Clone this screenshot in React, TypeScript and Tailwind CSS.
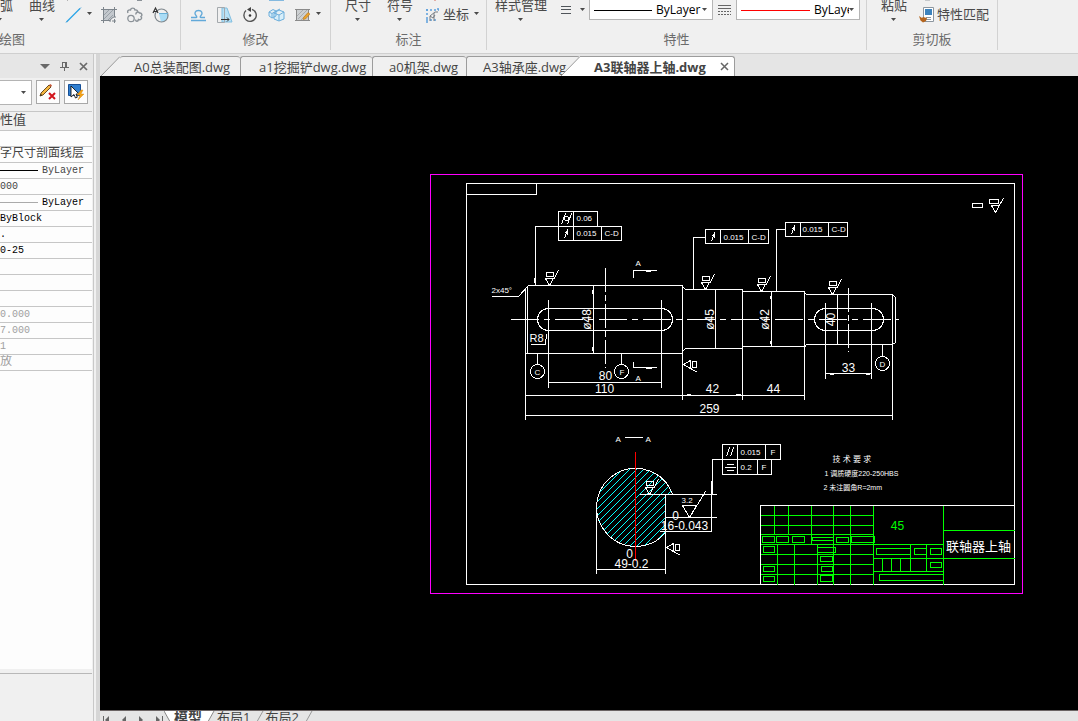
import React from "react";

const ui = "font-['Open_Sans','Noto_Sans_CJK_SC',sans-serif]";

function Caret({ className = "" }: { className?: string }) {
  return (
    <svg className={`shrink-0 ${className}`} width="6" height="4" viewBox="0 0 6 4">
      <path d="M0 0h5L2.5 3z" fill="#4a4a4a" />
    </svg>
  );
}

function Group({ label, className, inset = "", children }: { label: string; className: string; inset?: string; children: React.ReactNode }) {
  return (
    <section className={`flex h-[50px] shrink-0 flex-col border-r border-[#d2d2d2] ${className}`}>
      <div className={`flex h-[29px] shrink-0 items-start ${inset}`}>{children}</div>
      <h2 className="text-center text-[13px] leading-5 text-[#6b6b6b]">{label}</h2>
    </section>
  );
}

function BigButton({ label, className = "" }: { label: string; className?: string }) {
  return (
    <button className={`-mt-1 flex shrink-0 flex-col items-center text-[13px] leading-[18px] whitespace-nowrap ${className}`}>
      {label}
      <Caret className="mt-1" />
    </button>
  );
}

function ToolButton({ label, className = "", caret, text, children }: { label: string; className?: string; caret?: boolean; text?: string; children: React.ReactNode }) {
  return (
    <button aria-label={label} className={`flex h-7 shrink-0 items-center text-[13px] leading-7 whitespace-nowrap ${className}`}>
      <svg width="17" height="28" viewBox="0 0 17 28" fill="none" className="shrink-0">
        {children}
      </svg>
      {text && <span className="ml-px">{text}</span>}
      {caret && <Caret className="ml-[5px]" />}
    </button>
  );
}

function LineCombo({ label, stroke, line }: { label: string; stroke: string; line: string }) {
  return (
    <label className="flex h-5 w-[124px] shrink-0 items-center overflow-hidden border border-t-0 border-[#b5b5b5] bg-white">
      <svg height="2" className={`mr-1 ml-1 shrink-0 ${line}`}>
        <path d="M0 1h80" stroke={stroke} strokeWidth="1" shapeRendering="crispEdges" />
      </svg>
      <select aria-label={label} className="h-5 min-w-0 flex-1 appearance-none overflow-hidden bg-transparent p-0 text-[12px] leading-5 text-black">
        <option>ByLayer</option>
      </select>
      <Caret className="mr-1" />
    </label>
  );
}

function Ribbon() {
  return (
    <header className="flex h-[54px] shrink-0 overflow-hidden border-b border-[#cfcfcf] bg-[#f0f0f0] text-[#4a4a4a]">
      <Group label="绘图" className="-ml-[156px] w-[337px]">
        <div className="flex w-full justify-end pr-[1px]">
          <BigButton label="圆弧" className="mr-4" />
          <BigButton label="曲线" className="mr-[10px]" />
          <ToolButton label="构造线" caret className="w-[35px]">
            <path d="M1.500 22L15 8.500" stroke="#2aa4e8" strokeWidth="1.300" />
            <path d="M1 22.500l2-2M14 9.500l2-2" stroke="#4aa3d8" />
            <path d="M2 0h1" stroke="#777" />
          </ToolButton>
          <ToolButton label="图案填充" className="w-[26px]">
            <path d="M3 10h11v7l-4 4H3z" fill="#c3c8cd" />
            <path d="M3.500 7v16M14.500 7v10M1 9.500h16M1 20.500h9" stroke="#7d858c" />
            <path d="M4 15l5-5M4 19l9-9M8 20l5-5" stroke="#9aa1a8" />
            <path d="M10 22c0-3 2-5 6-5M12 21h4M14.500 19v4" stroke="#7d858c" />
          </ToolButton>
          <ToolButton label="修订云线" className="w-[26px]">
            <circle cx="5" cy="18.500" r="3.200" stroke="#8b9298" strokeWidth="1.300" />
            <path d="M2 13c-1-2 .5-3.500 2.500-3 .5-2.500 4-2.500 4.500 0 2-.5 3 1 2.500 2.500M10 14.500c-.5-2 2-3.500 3.500-1.500 2.500-.5 3 2.500 1.500 3.500 1.500 2-.5 4-2.500 3-.5 2.500-3 2-3 0" stroke="#8b9298" strokeWidth="1.400" />
            <path d="M11 0h5" stroke="#8b9298" strokeWidth="2" />
          </ToolButton>
          <ToolButton label="面域" className="w-[27px]">
            <path d="M7 14h9c0 5-2.500 8-7 8z" fill="#a9dcf6" />
            <circle cx="9.500" cy="15.500" r="6.500" stroke="#7f878d" strokeWidth="1.200" />
            <path d="M1 13L3.500 8 6 13M2 11.500h3" stroke="#333" strokeWidth="1.200" />
            <path d="M7 13.500h9" stroke="#6ab1d8" />
          </ToolButton>
        </div>
      </Group>
      <Group label="修改" className="w-[150px]" inset="pl-[9px]">
        <ToolButton label="偏移" className="w-[26px]">
          <path d="M1 20.500h15M1 17.500h5c1 0 1-1 0-2-2-2-1-5 2.500-5s4.500 3 2.500 5c-1 1-1 2 0 2h4" stroke="#62a9d9" strokeWidth="1.400" />
        </ToolButton>
        <ToolButton label="拉伸" className="w-[26px]">
          <path d="M6 8h5l5 14H6z" fill="#b8e2f7" stroke="#83bfe0" />
          <path d="M1.500 7.500h7v15h-7z" stroke="#a4a9ad" />
          <path d="M5 19.500h8M11 17.500l2 2-2 2" stroke="#333" />
        </ToolButton>
        <ToolButton label="旋转" className="w-[26px]">
          <path d="M4 10.500a6.200 6.200 0 1 0 6-1.200" stroke="#555" strokeWidth="1.400" />
          <path d="M9 7v5L5 9.500z" fill="#444" />
          <circle cx="8" cy="15.500" r="1.300" fill="#333" />
        </ToolButton>
        <ToolButton label="阵列" className="w-[26px]">
          <path d="M1 0h15" stroke="#84b9df" strokeWidth="2" />
          <path d="M1 12l4-2.500 3 1.500v5l-4 2-3-2zM1 12l3 1.500 4-2.500M4 13.500V18M6 13l5-3 5 2v7l-5 2-5-2zM6 13l5 2 5-3M11 15v6M8 11l4-2" fill="#d8effa" stroke="#6caedb" />
        </ToolButton>
        <ToolButton label="编辑图案" caret className="w-[28px]">
          <path d="M2.500 9.500h12v11h-12z" fill="#cdd0d2" stroke="#8a8a8a" />
          <path d="M4 19l9-9M3 16l6-6M7 20l7-7" stroke="#a8abad" />
          <path d="M1 9.500h15M1 20.500h15" stroke="#8a8a8a" />
          <path d="M9.500 17.500l4.500-5 2 1.500-4.500 5-2.500.5z" fill="#e8a22d" stroke="#b46f16" strokeWidth=".5" />
        </ToolButton>
      </Group>
      <Group label="标注" className="w-[156px]" inset="pl-[14px]">
        <BigButton label="尺寸" className="mr-4" />
        <BigButton label="符号" className="mr-[12px]" />
        <ToolButton label="坐标" text="坐标" caret>
          <path d="M1 10h13M1 20h10M2 9v14M13 8v4" stroke="#5b9fdb" strokeWidth="1.500" strokeDasharray="2 2" />
          <path d="M5 21v-5l5-4h3M5 16l3 2 2-3M9 13v8" stroke="#747b82" />
          <path d="M9 0h2" stroke="#d36b5a" />
        </ToolButton>
      </Group>
      <Group label="特性" className="w-[380px]" inset="pl-2">
        <BigButton label="样式管理" className="mr-[13px]" />
        <button aria-label="线宽" className="mt-1 flex h-[11px] shrink-0 items-center">
          <svg width="12" height="11" shapeRendering="crispEdges">
            <path d="M1 2.500h10M1 5.500h10M1 9.500h10" stroke="#50555a" />
          </svg>
          <Caret className="ml-2" />
        </button>
        <span className="w-[3px]" />
        <LineCombo label="线型" stroke="#000" line="w-[58px]" />
        <svg width="13" height="11" className="mx-[5px] mt-1 shrink-0" shapeRendering="crispEdges">
          <path d="M0 1.500h13M0 4.500h13" stroke="#666" />
          <path d="M0 7.500h13M0 10.500h13" stroke="#666" strokeDasharray="2 1" />
        </svg>
        <LineCombo label="颜色" stroke="#f00" line="w-[69px]" />
      </Group>
      <Group label="剪切板" className="w-[131px]" inset="pl-[14px]">
        <BigButton label="粘贴" className="mr-[12px]" />
        <ToolButton label="特性匹配" text="特性匹配">
          <path d="M6 0h5" stroke="#9aa0a6" />
          <path d="M4.500 7.500h10v14h-10z" fill="#fff" stroke="#8c969f" />
          <path d="M6 9h7v6H6z" fill="#3d83bd" />
          <path d="M7 17.500h5M7 19.500h5" stroke="#8c969f" />
          <path d="M0 16l3 2 1-1 4 1-1 3-3 1.500-2.500-2z" fill="#b5651d" />
        </ToolButton>
      </Group>
    </header>
  );
}

const rows: { value: string; tone: string; line?: string }[] = [
  { value: "", tone: "" },
  { value: "字尺寸剖面线层", tone: "text-[12px] text-[#444]" },
  { value: "ByLayer", tone: "text-[10px] text-[#444]", line: "#000" },
  { value: "000", tone: "text-[10px] text-[#444]" },
  { value: "ByLayer", tone: "text-[10px] text-black", line: "#aaa" },
  { value: "ByBlock", tone: "text-[10px] text-black" },
  { value: ".", tone: "text-[10px] text-black" },
  { value: "0-25", tone: "text-[10px] text-black" },
  { value: "", tone: "" },
  { value: "", tone: "" },
  { value: "", tone: "" },
  { value: "0.000", tone: "text-[10px] text-[#a0a0a0]" },
  { value: "7.000", tone: "text-[10px] text-[#a0a0a0]" },
  { value: "1", tone: "text-[10px] text-[#a0a0a0]" },
  { value: "放", tone: "text-[12px] text-[#a0a0a0]" },
];

function PropertyPanel() {
  return (
    <aside className="flex w-[100px] shrink-0 border-r-4 border-[#d6d6d6] bg-[#f0f0f0]">
      <div className="flex w-[94px] shrink-0 flex-col border-r border-[#c8c8c8]">
        <div className="flex h-6 shrink-0 items-center justify-end gap-[10px] bg-[#e6e6e6] pr-[5px]">
          <button aria-label="菜单">
            <svg width="10" height="6" className="block"><path d="M0 1h10L5 6z" fill="#696969" /></svg>
          </button>
          <button aria-label="固定">
            <svg width="9" height="10" className="block"><path d="M2.500 6V1.500h4V6M5.500 2v4M0 6.500h9M4.500 7v3" fill="none" stroke="#696969" shapeRendering="crispEdges" /></svg>
          </button>
          <button aria-label="关闭">
            <svg width="9" height="9" className="block"><path d="M1 1l7 7M8 1L1 8" stroke="#696969" strokeWidth="1.700" /></svg>
          </button>
        </div>
        <div className="flex h-[33px] shrink-0 items-start justify-end gap-1 pt-[2px] pr-[5px]">
          <label className="flex h-[25px] flex-1 items-center border border-l-0 border-[#b4b4b4] bg-white">
            <select aria-label="对象" className="min-w-0 flex-1 appearance-none bg-transparent"><option></option></select>
            <Caret className="mr-1" />
          </label>
          <button aria-label="清除选择" className="h-6 w-6 border border-[#a8a8a8] bg-[#fdfdfd]">
            <svg width="22" height="22" viewBox="0 0 22 22">
              <path d="M3 15l1-3 8-8 2 2-8 8z" fill="#f4b63f" stroke="#5a3c12" strokeWidth=".9" />
              <path d="M12 4l1.500-1 1.500 1.500L14 6z" fill="#c85a3c" />
              <path d="M3 15l1-2 1 1z" fill="#222" />
              <path d="M12 12l6 6M18 12l-6 6" stroke="#d2141c" strokeWidth="2" />
            </svg>
          </button>
          <button aria-label="快速选择" className="h-6 w-6 border border-[#a8a8a8] bg-[#fdfdfd]">
            <svg width="22" height="22" viewBox="0 0 22 22">
              <path d="M3.500 3.500h12v11h-12z" fill="#2f7fd0" stroke="#164f96" />
              <path d="M6 5v11l3-2.500 1.500 3.500 1.800-.8L11 13h3z" fill="#fff" stroke="#111" strokeWidth=".9" />
              <path d="M16 9l-4 5h3l-2 5 6-6h-3l2-4z" fill="#f6a316" stroke="#d07f08" strokeWidth=".4" />
            </svg>
          </button>
        </div>
        <div className="min-h-0 w-[92px] flex-1 overflow-hidden bg-[#fdfdfd] font-['Liberation_Mono','Noto_Sans_CJK_SC',monospace]">
          <table className="w-full table-fixed border-collapse">
            <thead>
              <tr className="border-y border-[#c6c6c6] bg-[#f0f0f0]">
                <th className="p-0 text-left text-[13px] leading-[18px] font-normal text-[#444]">
                  <div className="-ml-[13px] h-[18px] whitespace-nowrap">特性值</div>
                </th>
              </tr>
            </thead>
            <tbody>
              {rows.map((r, i) => (
                <tr key={i} className="border-b border-[#c6c6c6]">
                  <td className="p-0">
                    <div className={`flex h-[15px] items-center overflow-hidden leading-[15px] whitespace-nowrap ${r.tone}`}>
                      {r.line && (
                        <svg width="38" height="1" className="mr-1 shrink-0">
                          <path d="M0 .5h38" stroke={r.line} />
                        </svg>
                      )}
                      {r.value}
                    </div>
                  </td>
                </tr>
              ))}
            </tbody>
          </table>
        </div>
        <div className="h-[52px] w-[92px] shrink-0">
          <div className="h-[5px] border-b border-[#b8b8b8]" />
        </div>
      </div>
    </aside>
  );
}

const tabs = [
  { name: "A0总装配图.dwg", cls: "w-[120px] pl-[14px]" },
  { name: "a1挖掘铲dwg.dwg", cls: "w-[132px] pl-[18px] border-l" },
  { name: "a0机架.dwg", cls: "w-[94px] pl-4 border-l" },
  { name: "A3轴承座.dwg", cls: "w-[114px] pl-4 border-l" },
];

function FileTabs() {
  return (
    <nav className="flex h-[22px] shrink-0 items-end overflow-hidden bg-[#e5e5e5] text-[13px] leading-[18px] whitespace-nowrap text-[#444]">
      <svg width="20" height="20" className="shrink-0">
        <path d="M1 20L20 0V20z" fill="#f0f0f0" />
        <path d="M1 20L20 .5" stroke="#979797" />
      </svg>
      {tabs.map((t) => (
        <button key={t.name} className={`h-5 shrink-0 rounded-t-[3px] border-t border-[#9c9c9c] bg-[#f0f0f0] text-left ${t.cls}`}>
          {t.name}
        </button>
      ))}
      <svg width="19" height="20" className="z-10 -ml-[19px] shrink-0">
        <path d="M0 20L19 0V20z" fill="#fff" />
        <path d="M0 20L19 .5" stroke="#979797" />
      </svg>
      <div className="flex h-5 w-[155px] shrink-0 items-center rounded-tr-[3px] border-t border-r border-[#9c9c9c] bg-white pl-[14px]">
        <button className="font-bold">A3联轴器上轴.dwg</button>
        <button aria-label="关闭标签" className="mr-[5px] ml-auto">
          <svg width="9" height="9" className="block"><path d="M1 1l7 7M8 1L1 8" stroke="#666" strokeWidth="1.500" /></svg>
        </button>
      </div>
    </nav>
  );
}

function Txt({ x, y, s = 12, start, rot, fill = "#fff", children }: { x: number; y: number; s?: number; start?: boolean; rot?: boolean; fill?: string; children: React.ReactNode }) {
  return (
    <text
      x={x}
      y={y}
      fill={fill}
      stroke="none"
      fontSize={s}
      textAnchor={start ? "start" : "middle"}
      transform={rot ? `rotate(-90 ${x} ${y})` : undefined}
      className="font-['Liberation_Sans','Noto_Sans_CJK_SC',sans-serif]"
    >
      {children}
    </text>
  );
}

function Surface({ x, y }: { x: number; y: number }) {
  return <path d={`M${x} ${y}l-4 -7h8zM${x - 3} ${y - 13}h7v4h-7zM${x + 4} ${y - 6}l5 -9`} />;
}

function SideSurface({ x, y }: { x: number; y: number }) {
  return <path d={`M${x} ${y}l7 -4v8zM${x + 9} ${y - 3}h4v6h-4zM${x + 7} ${y + 4}l7 4`} />;
}

function Runout({ x, y, w = 63 }: { x: number; y: number; w?: number }) {
  return <path d={`M${x} ${y}h${w}v14h-${w}zM${x + 15} ${y}v14M${x + 43} ${y}v14M${x + 6} ${y + 12}l3 -9v5l-2 -2`} />;
}

const greenBoxes = [
  [762, 536, 12, 6], [776, 536, 12, 6], [792, 536, 12, 6], [812, 537, 21, 3], [836, 537, 12, 5], [851, 536, 23, 6],
  [763, 546, 11, 6], [763, 566, 11, 5], [763, 576, 11, 5], [817, 547, 18, 5], [820, 556, 12, 5], [821, 566, 11, 5],
  [820, 575, 12, 6], [876, 548, 34, 6], [914, 548, 12, 6], [930, 548, 11, 6], [930, 562, 11, 5], [879, 574, 64, 6],
];

const hatch = Array.from({ length: 22 }, (_, i) => 1070 + i * 7);

function Drawing() {
  return (
    <svg width="978" height="634" viewBox="100 76 978 634" className="block shrink-0">
      <defs>
        <clipPath id="section">
          <path d="M672 494A39 39 0 1 0 665 532V494z" />
        </clipPath>
      </defs>
      <g transform="translate(.5 .5)" fill="none" stroke="#fff" shapeRendering="crispEdges">
        <path d="M430 174H1022V593H430z" stroke="#f0f" />
        <path d="M466 183H1014V584H466zM466 194H536V183" />

        <path d="M558 211H597V226H558zM573 211V226M561 224l4 -11M567 224l4 -11" />
        <circle cx="566" cy="218" r="2" />
        <Runout x={558} y={226} />
        <path d="M558 226H535V285M534 277v5" />
        <Runout x={705} y={229} />
        <path d="M705 237H693V289" />
        <Runout x={785} y={222} w={62} />
        <path d="M785 229H776V291" />

        <path d="M525 353V288L528 285H682V353H525M527 285V353" />
        <path d="M682 286l3 3H742V348H685l-3 3M742 291H804V346H742M804 292l2 2H892l3 3V342l-3 2H806l-2 3" />
        <path d="M682 353V399M742 289V399M804 291V399M892 294V419M525 353V419" />
        <path d="M548 308H661A11 11 0 0 1 661 330H548A11 11 0 0 1 548 308z" />
        <path d="M825 308H872A11 11 0 0 1 872 330H825A11 11 0 0 1 825 308z" />
        <path d="M510 319H898" strokeDasharray="28 5 6 5" />
        <path d="M605 267V367M848 287V351" strokeDasharray="24 3 6 3" />
        <path d="M548 299V387M661 299V387M825 302V378M871 302V378" />
        <path d="M593 285V353M715 289V348M771 291V346M837 294V344" />
        <path d="M592 289v4M592 346v4M770 295v3M770 340v3" />
        <path d="M548 382H661M525 395H804M525 415H892M825 373H871" />
        <path d="M686 394h4M735 394h5M829 374h4M865 374h4" />
        <path d="M530 344H545L546 334" />
        <path d="M491 296H518L527 286" />
        <circle cx="537" cy="371" r="7" />
        <circle cx="621" cy="371" r="7" />
        <circle cx="882" cy="363" r="7" />
        <path d="M537 353V364M621 353V364M882 344V356" />
        <path d="M633 277V270H656M645 271h5M633 361V367H656M645 368h6" />
        <Surface x={549} y={285} />
        <Surface x={705} y={289} />
        <Surface x={761} y={291} />
        <Surface x={832} y={294} />
        <SideSurface x={683} y={364} />
        <path d="M972 203h10v4h-10zM989 199h9v4h-9zM991 205h8l-4 7zM998 206l5 -8" />

        <g clipPath="url(#section)" stroke="#0ff">
          {hatch.map((c) => (
            <path key={c} d={`M${c - 550} 550L${c - 450} 450`} />
          ))}
        </g>
        <path d="M672 494A39 39 0 1 0 665 532" />
        <path d="M635 451V560" stroke="#f00" />
        <path d="M624 437H642M639 494H716M665 517H716M659 531H711V480M712 494V459H722M665 494V573M596 506V573M596 569H665" />
        <path d="M682 505H696L689 517zM689 517L705 491" />
        <Surface x={649} y={494} />
        <SideSurface x={666} y={547} />
        <path d="M722 444H780V459H722zM737 444V459M765 444V459M722 459V474H771V459M737 459V474M757 459V474M726 456l3 -9M730 456l3 -9M726 464h7M724 467h11M726 470h7" />

        <path d="M760 584V505H1014" />
        <g stroke="#0f0">
          <path d="M760 515H873M760 525H873M760 534H873M760 544H943M760 554H873M760 564H873M760 574H873" />
          <path d="M774 505V534M788 505V534M811 505V544M833 505V584M850 505V584M873 505V584M777 544V584M794 544V584M817 544V584" />
          <path d="M943 505V584M943 530H1014M873 558H1014M873 571H943M910 544V571M926 544V571M882 558V571M891 558V571M900 558V571" />
          {greenBoxes.map(([x, y, w, h]) => (
            <rect key={`${x}-${y}`} x={x} y={y} width={w} height={h} />
          ))}
        </g>

        <Txt start x={576} y={220} s={8}>0.06</Txt>
        <Txt start x={576} y={235} s={8}>0.015</Txt>
        <Txt start x={604} y={235} s={8}>C-D</Txt>
        <Txt start x={723} y={239} s={8}>0.015</Txt>
        <Txt start x={751} y={239} s={8}>C-D</Txt>
        <Txt start x={802} y={231} s={8}>0.015</Txt>
        <Txt start x={831} y={231} s={8}>C-D</Txt>
        <Txt start x={740} y={454} s={8}>0.015</Txt>
        <Txt start x={770} y={454} s={8}>F</Txt>
        <Txt start x={740} y={469} s={8}>0.2</Txt>
        <Txt start x={761} y={469} s={8}>F</Txt>
        <Txt start x={491} y={292} s={8}>2x45°</Txt>
        <Txt start x={635} y={265} s={8}>A</Txt>
        <Txt start x={635} y={380} s={8}>A</Txt>
        <Txt start x={615} y={441} s={8}>A</Txt>
        <Txt start x={645} y={441} s={8}>A</Txt>
        <Txt start x={534} y={374} s={8}>C</Txt>
        <Txt start x={619} y={374} s={8}>F</Txt>
        <Txt start x={879} y={366} s={8}>D</Txt>
        <Txt start x={681} y={502} s={8}>3.2</Txt>
        <Txt x={536} y={341} s={11}>R8</Txt>
        <Txt x={605} y={379}>80</Txt>
        <Txt x={604} y={392}>110</Txt>
        <Txt x={712} y={392}>42</Txt>
        <Txt x={773} y={392}>44</Txt>
        <Txt x={709} y={412}>259</Txt>
        <Txt x={848} y={371}>33</Txt>
        <Txt x={590} y={319} rot>ø48</Txt>
        <Txt x={713} y={319} rot>ø45</Txt>
        <Txt x={768} y={319} rot>ø42</Txt>
        <Txt x={834} y={319} rot>40</Txt>
        <Txt x={675} y={519}>0</Txt>
        <Txt x={684} y={529}>16-0.043</Txt>
        <Txt x={629} y={557}>0</Txt>
        <Txt x={631} y={567}>49-0.2</Txt>
        <Txt x={897} y={529} fill="#0f0">45</Txt>
        <Txt x={978} y={550} s={13}>联轴器上轴</Txt>
        <Txt start x={832} y={461} s={8}>技 术 要 求</Txt>
        <Txt start x={824} y={475} s={7}>1 调质硬度220-250HBS</Txt>
        <Txt start x={823} y={489} s={7}>2 未注圆角R=2mm</Txt>
      </g>
    </svg>
  );
}

function LayoutTabs() {
  return (
    <footer className="flex h-[11px] shrink-0 items-start overflow-hidden border-t border-[#6b6464] bg-[#e5e5e5] text-[13px] leading-3 whitespace-nowrap text-[#444]">
      <div className="flex h-[18px] w-16 shrink-0 items-center gap-3 pl-[3px]">
        <button aria-label="第一个"><svg width="7" height="8" className="block"><path d="M0 0h1v8H0zM6 0v8L2 4z" fill="#666" /></svg></button>
        <button aria-label="上一个"><svg width="5" height="8" className="block"><path d="M4 0v8L0 4z" fill="#666" /></svg></button>
        <button aria-label="下一个"><svg width="5" height="8" className="block"><path d="M0 0v8l4-4z" fill="#666" /></svg></button>
        <button aria-label="最后一个"><svg width="7" height="8" className="block"><path d="M0 0v8l4-4zM6 0h1v8H6z" fill="#666" /></svg></button>
      </div>
      <svg width="9" height="16" className="shrink-0"><path d="M0 0h9v16z" fill="#fff" /><path d="M0 0l9 16" stroke="#888" /></svg>
      <button className="h-3 bg-white px-px text-[14px] font-bold">模型</button>
      <svg width="14" height="16" className="shrink-0"><path d="M0 0h11L2 16H0z" fill="#fff" /><path d="M11 0L2 16" stroke="#888" /></svg>
      <button>布局1</button>
      <svg width="15" height="16" className="shrink-0"><path d="M13 0L4 16" stroke="#999" /></svg>
      <button>布局2</button>
      <svg width="15" height="16" className="shrink-0"><path d="M13 0L4 16" stroke="#999" /></svg>
    </footer>
  );
}

export default function App() {
  return (
    <div className={`flex h-screen flex-col overflow-hidden bg-[#f0f0f0] ${ui}`}>
      <Ribbon />
      <div className="flex min-h-0 flex-1">
        <PropertyPanel />
        <main className="flex min-w-0 flex-1 flex-col">
          <FileTabs />
          <div className="min-h-0 flex-1 overflow-hidden bg-black">
            <Drawing />
          </div>
          <LayoutTabs />
        </main>
      </div>
    </div>
  );
}
